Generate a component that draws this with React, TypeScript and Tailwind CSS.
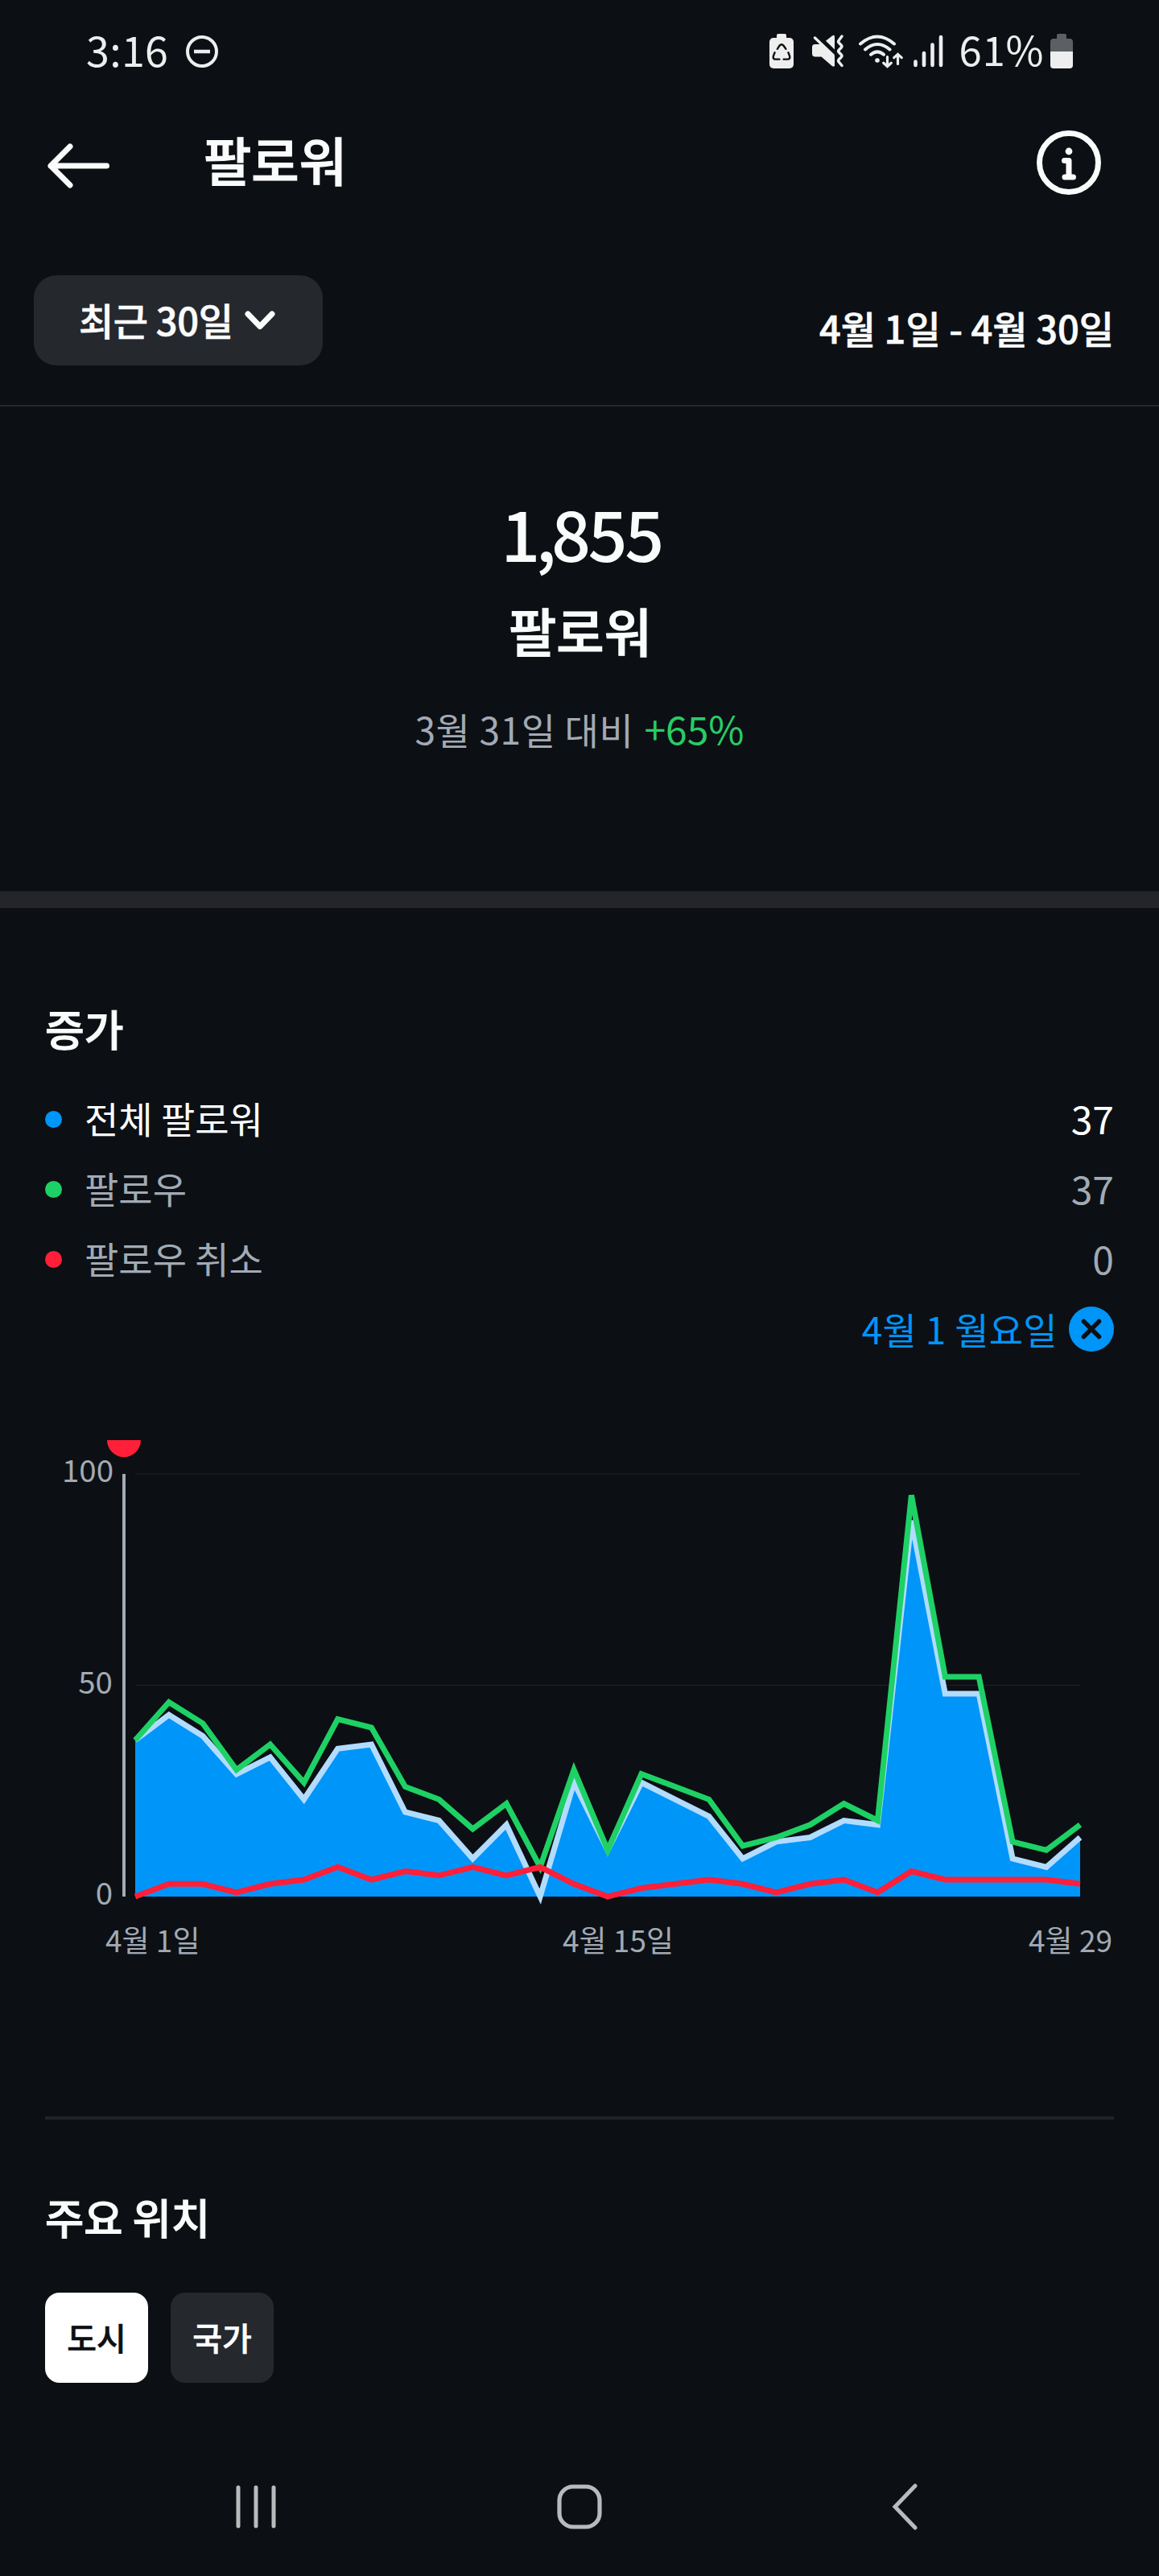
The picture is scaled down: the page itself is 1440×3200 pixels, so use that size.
import { useState } from "react";

type DayStats = {
  follows: number;
  unfollows: number;
};

const follows = [37, 46, 41, 30, 36, 27, 42, 40, 26, 23, 16, 22, 7, 30, 11, 29, 26, 23, 12, 14, 17, 22, 18, 95, 52, 52, 13, 11, 17];
const unfollows = [0, 3, 3, 1, 3, 4, 7, 4, 6, 5, 7, 5, 7, 3, 0, 2, 3, 4, 3, 1, 3, 4, 1, 6, 4, 4, 4, 4, 3];

const days: DayStats[] = follows.map((value, i) => ({ follows: value, unfollows: unfollows[i] }));

const legend = [
  { label: "전체 팔로워", value: 37, dot: "bg-[#0095f9]", text: "text-white" },
  { label: "팔로우", value: 37, dot: "bg-[#1ed165]", text: "text-[#a2aab4]" },
  { label: "팔로우 취소", value: 0, dot: "bg-[#ff1f38]", text: "text-[#a2aab4]" }
];

const locationTabs = ["도시", "국가"];

// Chart geometry, in pixels of the svg
const plot = { left: 168, right: 1342, top: 42, bottom: 567 };

export default function App() {
  return (
    <main className="flex h-[3200px] w-[1440px] flex-col overflow-hidden bg-[#0c1014] font-['Noto_Sans_CJK_KR','Noto_Sans',sans-serif] text-[#fafbfb]">
      <StatusBar />
      <Header />
      <FilterBar />
      <Summary />
      <div className="h-[21px] shrink-0 bg-[#242529]" />
      <Growth />
      <hr className="mx-14 mt-[189px] h-1 shrink-0 border-0 bg-[#212327]" />
      <TopLocations />
      <NavigationBar />
    </main>
  );
}

function StatusBar() {
  return (
    <div className="flex h-[127px] shrink-0 items-center justify-between px-[107px] text-[#eeeeee]">
      <div className="flex items-center gap-[21px]">
        <span className="-mt-[6px] text-[52px] leading-none tracking-[0.3px]">3:16</span>
        <svg fill="none" height="42" stroke="currentColor" strokeWidth="4" viewBox="0 0 42 42" width="42">
          <circle cx="21" cy="21" r="18" />
          <path d="M11 21h20" strokeWidth="4.5" />
        </svg>
      </div>

      <div className="flex items-center">
        <svg fill="none" height="43" viewBox="0 0 30 43" width="30">
          <path d="M9 6V2q0-2 2-2h8q2 0 2 2v4z" fill="currentColor" />
          <rect fill="currentColor" height="38" rx="5" width="30" y="5" />
          <path
            d="M9.8 18.8L12.6 14.6Q15 11.8 17.4 14.6L20.4 18.8M6.6 23.3L4.9 27.5Q4 31.6 7.5 31.6H12.4M23.4 23.3L25.1 27.5Q26 31.6 22.5 31.6H17.6"
            stroke="#0c1014"
            strokeLinecap="round"
            strokeWidth="2.4"
          />
        </svg>
        <svg className="ml-[22px]" fill="none" height="41" viewBox="0 0 42 41" width="42">
          <path d="M4.5 12H12.5L29 26.5V39q-1.5 1.2-3.2 0L12.5 27.5H5q-4 0-4-4V15.5Q1 12 4.5 12z" fill="currentColor" />
          <path d="M18 7.8L26 1.4q3-1.8 3 1V18.5z" fill="currentColor" />
          <path
            d="M4.5 4L27 25.5M38 2L34 7.4Q33 8.8 34.2 10L37.3 13.2Q38.6 14.6 37.3 16L34.2 19.2Q33 20.5 34.2 21.8L37.3 25Q38.6 26.4 37.3 27.8L34.2 31Q33 32.4 34 33.6L38 38.5"
            stroke="currentColor"
            strokeLinecap="round"
            strokeWidth="3.4"
          />
        </svg>
        <svg className="ml-[17px]" fill="none" height="42" stroke="currentColor" strokeLinecap="round" viewBox="0 0 55 42" width="55">
          <path d="M2 11.5Q23 -6.5 44 11.5M8 18.5Q23 5.5 38.5 18.5M15 24.8Q23 18 31 24.8" strokeWidth="4" />
          <circle cx="23" cy="32" fill="currentColor" r="2.8" stroke="none" />
          <path d="M35.5 27.5V39M30.8 35.2L35.5 39.5L40.2 35.2M48.5 36.5V25M43.8 28.6L48.5 24.3L53.2 28.6" strokeWidth="3.2" />
        </svg>
        <svg className="ml-[13px]" fill="none" height="41" stroke="currentColor" strokeLinecap="round" strokeWidth="4.6" viewBox="0 0 37 41" width="37">
          <path d="M2.5 33.5V38M13 23V38M23.5 12.5V38M34 3V38" />
        </svg>
        <span className="-mt-[6px] ml-[20px] text-[51px] leading-none tracking-[0.6px]">61%</span>
        <svg className="ml-2" height="43" viewBox="0 0 28 43" width="28">
          <path d="M8 6V2q0-2 2-2h8q2 0 2 2v4h4q4 0 4 4v12H0V10q0-4 4-4z" fill="#5d6063" />
          <path d="M0 22H28V39q0 4-4 4H4q-4 0-4-4z" fill="currentColor" />
        </svg>
      </div>
    </div>
  );
}

function Header() {
  return (
    <header className="flex h-[151px] shrink-0 items-center pr-[72px] pl-[59px]">
      <button aria-label="뒤로" className="mt-[6px]" type="button">
        <svg fill="none" height="56" stroke="currentColor" strokeLinecap="round" strokeLinejoin="round" strokeWidth="7" viewBox="0 0 78 56" width="78">
          <path d="M4 28H73.5M28 4L4 28L28 52" />
        </svg>
      </button>
      <h1 className="-mt-[10px] ml-[116px] text-[64.5px] leading-none font-medium [-webkit-text-stroke:1.2px_currentColor]">팔로워</h1>
      <button aria-label="정보" className="-mt-[2px] ml-auto" type="button">
        <svg fill="none" height="80" stroke="currentColor" strokeLinecap="round" strokeLinejoin="round" strokeWidth="7" viewBox="0 0 80 80" width="80">
          <circle cx="40" cy="40" r="36.5" />
          <circle cx="40" cy="26" fill="currentColor" r="4.4" stroke="none" />
          <path d="M34.5 37.5H40V58M35 58H45.5" />
        </svg>
      </button>
    </header>
  );
}

function FilterBar() {
  return (
    <div className="flex shrink-0 items-center justify-between border-b-2 border-[#25282d] pt-16 pr-14 pb-[49px] pl-[42px] text-[47px] leading-none font-medium [-webkit-text-stroke:0.7px_currentColor]">
      <button className="flex h-28 w-[359px] items-center rounded-[28px] bg-[#25282d] pl-14" type="button">
        <span className="-mt-[3px] tracking-[-0.4px]">최근 30일</span>
        <svg className="ml-[15px]" fill="none" height="24" stroke="currentColor" strokeLinecap="round" strokeLinejoin="round" strokeWidth="7" viewBox="0 0 38 24" width="38">
          <path d="M4 4L19 19.5L34 4" />
        </svg>
      </button>
      <p className="mt-[16px]">4월 1일 - 4월 30일</p>
    </div>
  );
}

function Summary() {
  return (
    <section className="flex h-[602px] shrink-0 flex-col items-center pt-[113px]">
      <p className="pl-1 text-[86px] leading-none font-medium tracking-[-3.4px]">
        1<span className="-mr-[3px] -ml-[2px]">,</span>855
      </p>
      <h2 className="mt-[46px] ml-[2px] text-[64.5px] leading-none font-medium [-webkit-text-stroke:1.2px_currentColor]">팔로워</h2>
      <p className="mt-[65px] flex items-baseline gap-[13px] text-[48px] leading-none text-[#a2aab4]">
        <span className="text-[46px] tracking-[0.6px]">3월 31일 대비</span>
        <span className="text-[#28cc66]">+65%</span>
      </p>
    </section>
  );
}

function Growth() {
  const [selectedDate, setSelectedDate] = useState<string | null>("4월 1 월요일");

  return (
    <section className="shrink-0 pt-[122px]">
      <div className="px-14">
        <h3 className="mb-[42px] text-[53px] leading-[54px] font-medium [-webkit-text-stroke:1px_currentColor]">증가</h3>
        {legend.map((item) => (
          <div className={`flex h-[87px] items-center text-[46px] leading-none ${item.text}`} key={item.label}>
            <span className={`mt-[2px] h-[21px] w-[21px] rounded-full ${item.dot}`} />
            <span className="-mt-[3px] ml-[28px]">{item.label}</span>
            <span className="-mt-[4px] ml-auto text-[48px]">{item.value}</span>
          </div>
        ))}
        <div className="flex h-[87px] items-center justify-end gap-[14px] text-[46px] leading-none text-[#0095f9]">
          {selectedDate && (
            <>
              <span className="-mt-[2px] tracking-[0.3px]">{selectedDate}</span>
              <button aria-label="선택 해제" onClick={() => setSelectedDate(null)} type="button">
                <svg fill="none" height="56" viewBox="0 0 56 56" width="56">
                  <circle cx="28" cy="28" fill="currentColor" r="28" />
                  <path d="M18.5 18.5L37.5 37.5M37.5 18.5L18.5 37.5" stroke="#0c1014" strokeLinecap="round" strokeWidth="5.5" />
                </svg>
              </button>
            </>
          )}
        </div>
      </div>
      <GrowthChart />
    </section>
  );
}

function GrowthChart() {
  const x = (i: number) => plot.left + (i * (plot.right - plot.left)) / (days.length - 1);
  const y = (value: number) => plot.bottom - (value * (plot.bottom - plot.top)) / 100;
  const toPoints = (values: number[]) => values.map((value, i) => `${x(i).toFixed(1)},${y(value).toFixed(1)}`).join(" ");

  const net = toPoints(days.map((day) => day.follows - day.unfollows));

  return (
    <svg className="mt-[95px] block overflow-hidden" height="651" viewBox="0 0 1440 651" width="1440">
      <path d={`M${plot.left} ${plot.top}H${plot.right}`} stroke="#16191e" strokeWidth="2" />
      <path d={`M${plot.left} 304.5H${plot.right}`} stroke="#202328" strokeWidth="1" />
      <path d={`M154 ${plot.top}V${plot.bottom}`} stroke="#a2aab4" strokeWidth="4" />
      <circle cx="154" cy="0" fill="#ff1f38" r="21" />

      <polygon fill="#0095f9" points={`${plot.left},${plot.bottom} ${net} ${plot.right},${plot.bottom}`} />
      <g fill="none" strokeWidth="7">
        <polyline points={net} stroke="#b2dcff" />
        <polyline points={toPoints(days.map((day) => day.follows))} stroke="#1ed165" />
        <polyline points={toPoints(days.map((day) => day.unfollows))} stroke="#ff1f38" />
      </g>

      <g fill="#a2aab4" fontSize="38.5" textAnchor="end">
        <text x="141" y="52">100</text>
        <text x="140" y="314.5">50</text>
        <text x="140" y="576.5">0</text>
      </g>
      <g fill="#a2aab4" fontSize="37">
        <text x="131" y="636">4월 1일</text>
        <text x="699" y="636">4월 15일</text>
        <text textAnchor="end" x="1382" y="636">4월 29</text>
      </g>
    </svg>
  );
}

function TopLocations() {
  const [activeTab, setActiveTab] = useState(locationTabs[0]);

  return (
    <section className="shrink-0 px-14 pt-[94px]">
      <h3 className="text-[52.5px] leading-[53px] font-medium [-webkit-text-stroke:1px_currentColor]">주요 위치</h3>
      <div className="mt-[68px] flex gap-7">
        {locationTabs.map((tab) => (
          <button
            className={`h-28 w-32 rounded-[18px] pb-[3px] text-[40px] leading-none font-medium [-webkit-text-stroke:0.6px_currentColor] ${tab === activeTab ? "bg-white text-[#0c1014]" : "bg-[#25282d] text-white"}`}
            key={tab}
            onClick={() => setActiveTab(tab)}
            type="button"
          >
            {tab}
          </button>
        ))}
      </div>
    </section>
  );
}

function NavigationBar() {
  return (
    <nav className="mx-[117px] mt-auto grid h-[173px] shrink-0 grid-cols-3 place-items-center text-[#b9babb]">
      <svg fill="none" height="54" stroke="currentColor" strokeLinecap="round" strokeWidth="5" viewBox="0 0 50 54" width="50">
        <path d="M3 3V51M25 3V51M47 3V51" />
      </svg>
      <svg fill="none" height="56" stroke="currentColor" strokeWidth="5.2" viewBox="0 0 56 56" width="56">
        <rect height="50" rx="17" width="50" x="3" y="3" />
      </svg>
      <svg className="ml-[3px]" fill="none" height="58" stroke="currentColor" strokeLinecap="round" strokeWidth="5" viewBox="0 0 32 58" width="32">
        <path d="M29 3L4 29L29 55" />
      </svg>
    </nav>
  );
}
